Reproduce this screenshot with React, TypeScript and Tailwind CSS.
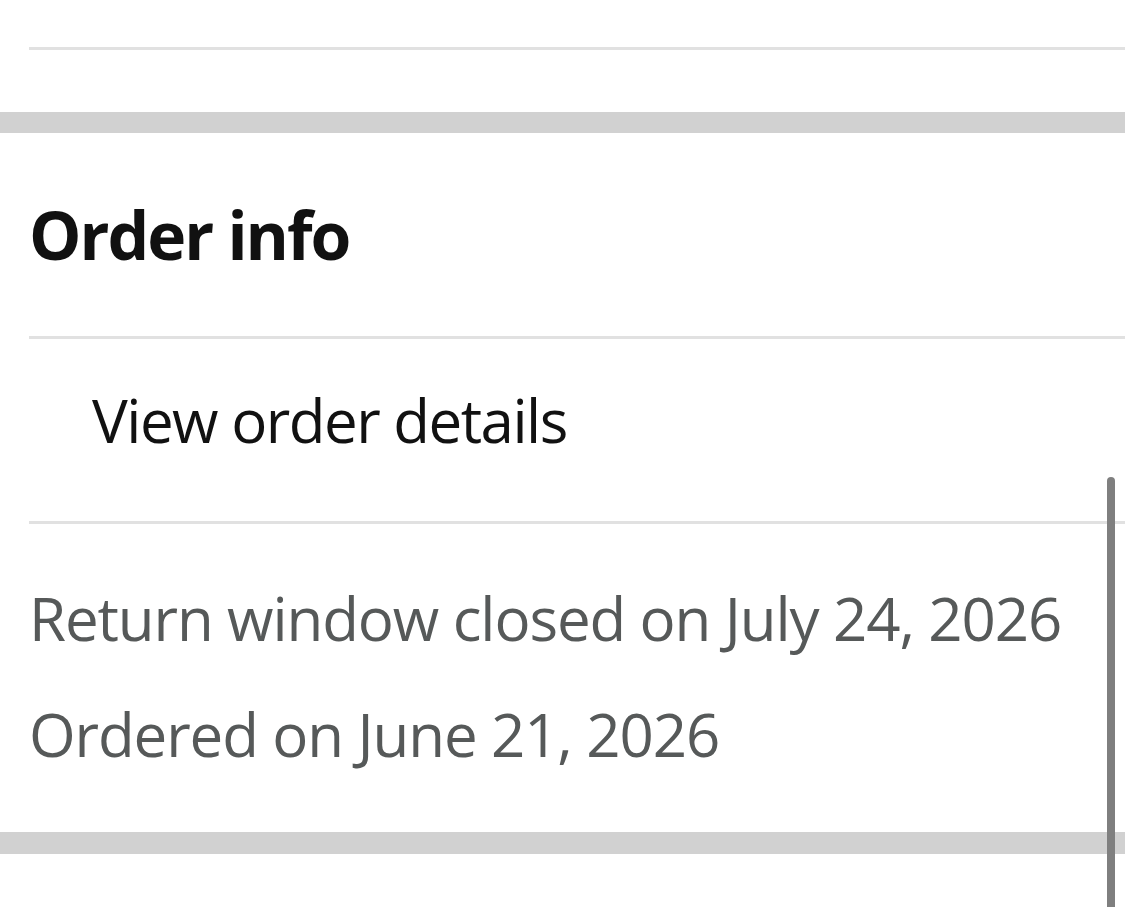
export default function App() {
  return (
    <div className="relative h-[907px] w-full overflow-hidden bg-white font-['Open_Sans',sans-serif]">
      <div className="h-[47px]" />
      <div className="ml-[29px] h-[3px] bg-[#e1e1e1]" />
      <div className="h-[62px]" />
      <div className="h-[21px] bg-[#d1d1d1]" />

      <section>
        <h2 className="pl-[29px] pt-[68px] pb-[69px] text-[66px] font-bold leading-[66px] tracking-[-2px] text-[#111]">
          Order info
        </h2>
        <div className="ml-[29px] h-[3px] bg-[#e1e1e1]" />
        <div className="pl-[92px] pt-[51px] pb-[71px] text-[60px] leading-[60px] tracking-[-1.5px] text-[#111]">
          View order details
        </div>
        <div className="ml-[29px] h-[3px] bg-[#e1e1e1]" />
        <div className="pl-[29px] pt-[64px] pb-[68px] text-[60px] leading-[60px] tracking-[-1.1px] text-[#565959]">
          <p>Return window closed on July 24, 2026</p>
          <p className="mt-[56px]">Ordered on June 21, 2026</p>
        </div>
      </section>

      <div className="h-[22px] bg-[#d1d1d1]" />

      {/* scroll indicator */}
      <div className="absolute top-[477px] bottom-0 right-[10px] w-[8px] rounded-t-full bg-[#7f7f7f]" />
    </div>
  );
}
